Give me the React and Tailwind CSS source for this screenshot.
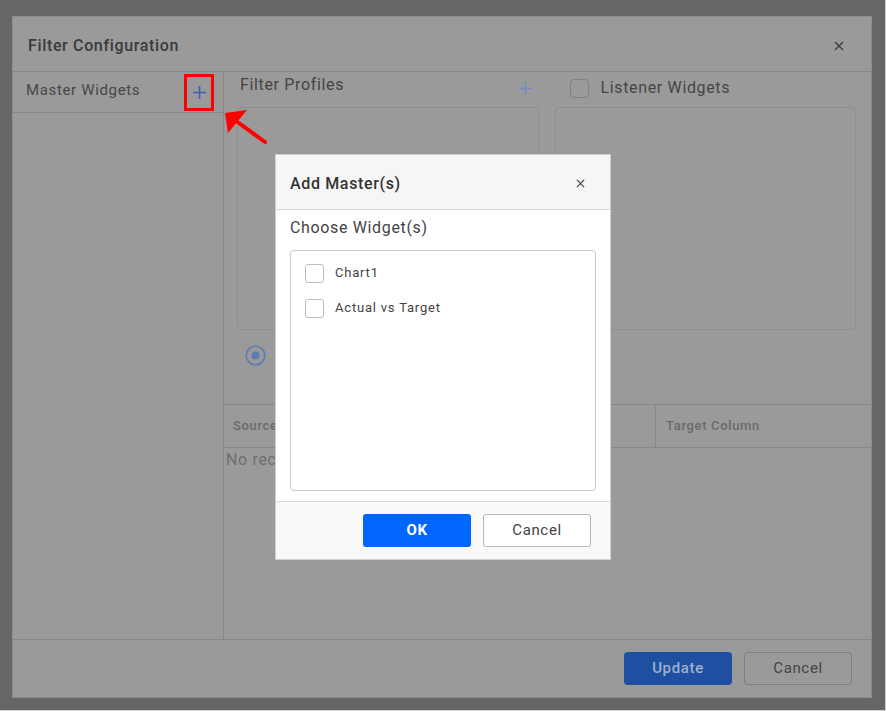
const font = { fontFamily: "Roboto, 'Liberation Sans', sans-serif" };

const Plus = ({ color, size = 16, stroke = 1.6 }) => (
  <svg width={size} height={size} viewBox="0 0 16 16">
    <path d="M8 1v14M1 8h14" stroke={color} strokeWidth={stroke} fill="none" />
  </svg>
);

const Close = ({ color, size = 10 }) => (
  <svg width={size} height={size} viewBox="0 0 10 10">
    <path d="M1 1l8 8M9 1l-8 8" stroke={color} strokeWidth="1.4" fill="none" />
  </svg>
);

const AddMasterDialog = () => {
  const widgets = ["Chart1", "Actual vs Target"];
  return (
    <div className="absolute left-[275px] top-[154px] w-[336px] h-[406px] bg-white border border-[#cfcfcf] flex flex-col">
      <div className="h-[55px] shrink-0 bg-[#f6f6f6] border-b border-[#d6d6d6] flex items-center justify-between pl-[14px] pr-[25px] pt-[3px]">
        <span className="text-[16px] text-[#333] font-medium">Add Master(s)</span>
        <Close color="#444" size={9} />
      </div>
      <div className="flex-1 px-[14px] pb-[10px] flex flex-col">
        <div className="h-[40px] pt-[8px] text-[16px] leading-[20px] text-[#444]">Choose Widget(s)</div>
        <div className="flex-1 border border-[#c8c8c8] rounded-[4px] pt-[12px] pl-[14px] flex flex-col gap-[15px]">
          {widgets.map((w) => (
            <label key={w} className="flex items-center gap-[11px] h-[20px]">
              <span className="w-[19px] h-[19px] rounded-[3px] border border-[#bdbdbd] bg-white" />
              <span className="text-[13px] text-[#444] tracking-[0.8px]">{w}</span>
            </label>
          ))}
        </div>
      </div>
      <div className="h-[58px] shrink-0 bg-[#f9f9f9] border-t border-[#dcdcdc] flex items-center justify-end gap-[12px] pr-[19px]">
        <button className="w-[108px] h-[33px] rounded-[3px] bg-[#0066ff] text-white text-[15px] font-bold">OK</button>
        <button className="w-[108px] h-[33px] rounded-[3px] border border-[#b8b8b8] bg-white text-[#444] text-[15px]">Cancel</button>
      </div>
    </div>
  );
};

export default function App() {
  return (
    <div style={font} className="relative w-[886px] h-[711px] bg-[#666] border-r border-b border-[#d0d0d0] pt-[16px] pl-[12px] overflow-hidden tracking-[0.65px]">
      <div className="w-[860px] h-[682px] bg-[#9a9a9a] border border-[#8c8c8c] flex flex-col">
        {/* header */}
        <div className="h-[55px] shrink-0 border-b border-[#878787] flex items-center justify-between pl-[15px] pr-[27px] pt-[3px]">
          <span className="text-[16px] font-medium text-[#3a3a3a]">Filter Configuration</span>
          <Close color="#3f3f3f" size={10} />
        </div>

        {/* body */}
        <div className="flex-1 flex min-h-0">
          <div className="w-[211px] shrink-0 border-r border-[#878787] flex flex-col">
            <div className="h-[41px] border-b border-[#878787] flex items-center justify-between pl-[13px] pr-[9px]">
              <span className="mb-[4px] text-[15px] text-[#474747]">Master Widgets</span>
              <div className="w-[30px] h-[37px] border-[3px] border-[#ff0000] flex items-center justify-center">
                <Plus color="#3c63ad" size={15} stroke={1.8} />
              </div>
            </div>
          </div>

          <div className="flex-1 flex flex-col">
            <div className="grid grid-cols-2 gap-[16px] pl-[13px] pr-[15px]">
              <div>
                <div className="h-[35px] flex items-start justify-between pl-[3px] pr-[6px]">
                  <span className="mt-[3px] text-[16px] leading-[20px] text-[#444]">Filter Profiles</span>
                  <span className="mt-[9px]"><Plus color="#6c8bc2" size={15} stroke={1.5} /></span>
                </div>
                <div className="h-[223px] border border-[#8e8e8e] rounded-[4px]" />
              </div>
              <div>
                <div className="h-[35px] flex items-start gap-[12px] pl-[15px]">
                  <span className="mt-[7px] w-[19px] h-[19px] rounded-[4px] border border-[#7f7f7f]" />
                  <span className="mt-[6px] text-[16px] leading-[20px] text-[#454545]">Listener Widgets</span>
                </div>
                <div className="h-[223px] border border-[#8e8e8e] rounded-[4px]" />
              </div>
            </div>

            <div className="pl-[21px] mt-[15px]">
              <svg width="21" height="21" viewBox="0 0 21 21">
                <circle cx="10.5" cy="10.5" r="9.3" fill="none" stroke="#5a7cb8" strokeWidth="1.6" />
                <circle cx="10.5" cy="10.5" r="4" fill="#5a7cb8" />
              </svg>
            </div>

            <div className="mt-[38px] border-t border-b border-[#888] h-[44px] flex text-[13px] font-medium text-[#6a6a6a]">
              <div className="w-[432px] border-r border-[#888] flex items-center pl-[9px]">Source Column</div>
              <div className="flex-1 flex items-center pl-[10px]">Target Column</div>
            </div>
            <div className="pl-[2px] text-[16px] text-[#6e6e6e]">No records to display</div>
          </div>
        </div>

        {/* footer */}
        <div className="h-[58px] shrink-0 border-t border-[#878787] flex items-center justify-end gap-[12px] pr-[19px]">
          <button className="w-[108px] h-[33px] rounded-[4px] bg-[#1f4fa0] text-[#9fb1cf] text-[15px] font-medium">Update</button>
          <button className="w-[108px] h-[33px] rounded-[4px] border border-[#7e7e7e] text-[#444] text-[15px]">Cancel</button>
        </div>
      </div>

      <svg className="absolute left-[220px] top-[105px]" width="52" height="45" viewBox="0 0 52 45">
        <path d="M45 37L12 13" stroke="#ff0000" strokeWidth="4" strokeLinecap="round" />
        <polygon points="5,8 27,5 8,28" fill="#ff0000" />
      </svg>

      <AddMasterDialog />
    </div>
  );
}
